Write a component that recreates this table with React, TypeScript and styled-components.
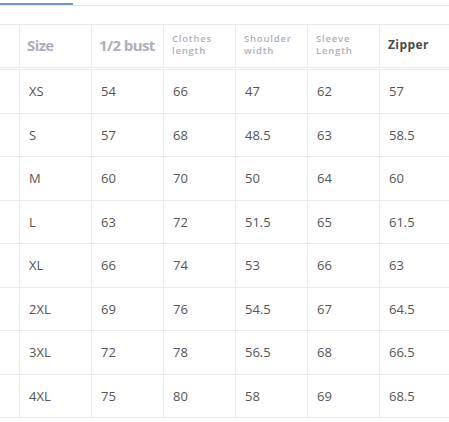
import React from "react"
import styled, { createGlobalStyle } from "styled-components"

const GlobalStyle = createGlobalStyle`
  body {
    margin: 0;
    background: #fff;
    font-family: "Open Sans", "Liberation Sans", sans-serif;
  }
`

const TabBar = styled.div`
  height: 5px;
  border-bottom: 1px solid #e4e7ea;
  position: relative;
`

const TabIndicator = styled.div`
  position: absolute;
  left: 0;
  top: 3px;
  width: 73px;
  height: 2px;
  background: #6f98c6;
`

const Wrap = styled.div`
  margin-top: 18px;
  overflow: hidden;
  width: 449px;
`

const Row = styled.div<{ $head?: boolean }>`
  display: grid;
  grid-template-columns: 20px 72px 72px 72px 72px 72px 120px;
  height: ${(p) => (p.$head ? "46px" : "43.5px")};
  box-sizing: border-box;
  border-top: ${(p) => (p.$head ? "1px solid #e6e9ec" : "none")};
  border-bottom: ${(p) => (p.$head ? "3px double #e6e9ec" : "1px solid #e8ebee")};
`

const Cell = styled.div`
  display: flex;
  align-items: center;
  padding-left: 9px;
  border-right: 1px solid #e8ebee;
  font-size: 13px;
  color: #555;
`

type HeadKind = "big" | "small" | "dark"

const HeadCell = styled(Cell)<{ $kind: HeadKind }>`
  padding-bottom: 3px;
  padding-left: ${(p) => (p.$kind === "big" ? "7px" : "8px")};
  font-weight: ${(p) => (p.$kind === "small" ? 600 : 700)};
  color: ${(p) => (p.$kind === "dark" ? "#4a4a4a" : "#aeaebb")};
  font-size: ${(p) => (p.$kind === "big" ? "15px" : p.$kind === "dark" ? "12px" : "9.5px")};
  letter-spacing: ${(p) =>
    p.$kind === "big" ? "-0.6px" : p.$kind === "dark" ? "0.4px" : "0.8px"};
  line-height: ${(p) => (p.$kind === "small" ? "12px" : "normal")};
`

const headers: { label: React.ReactNode; kind: HeadKind }[] = [
  { label: "Size", kind: "big" },
  { label: "1/2 bust", kind: "big" },
  { label: <>Clothes<br />length</>, kind: "small" },
  { label: <>Shoulder<br />width</>, kind: "small" },
  { label: <>Sleeve<br />Length</>, kind: "small" },
  { label: "Zipper", kind: "dark" },
]

const rows = [
  ["XS", "54", "66", "47", "62", "57"],
  ["S", "57", "68", "48.5", "63", "58.5"],
  ["M", "60", "70", "50", "64", "60"],
  ["L", "63", "72", "51.5", "65", "61.5"],
  ["XL", "66", "74", "53", "66", "63"],
  ["2XL", "69", "76", "54.5", "67", "64.5"],
  ["3XL", "72", "78", "56.5", "68", "66.5"],
  ["4XL", "75", "80", "58", "69", "68.5"],
]

export default function App() {
  return (
    <>
      <GlobalStyle />
      <TabBar>
        <TabIndicator />
      </TabBar>
      <Wrap>
        <Row $head>
          <Cell />
          {headers.map((h, i) => (
            <HeadCell key={i} $kind={h.kind}>
              <span>{h.label}</span>
            </HeadCell>
          ))}
        </Row>
        {rows.map((r) => (
          <Row key={r[0]}>
            <Cell />
            {r.map((v, i) => (
              <Cell key={i}>{v}</Cell>
            ))}
          </Row>
        ))}
      </Wrap>
    </>
  )
}
